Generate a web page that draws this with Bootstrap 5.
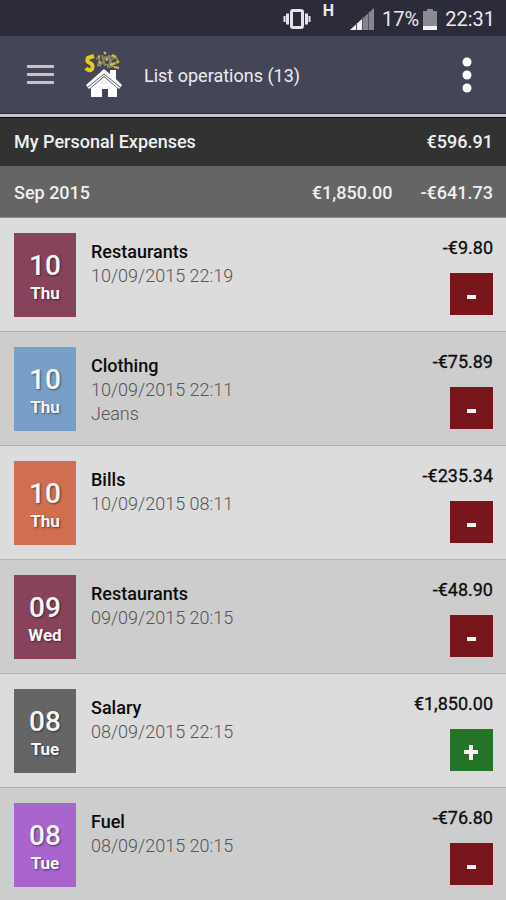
<!DOCTYPE html>
<html lang="en">
<head>
<meta charset="utf-8">
<meta name="viewport" content="width=device-width, initial-scale=1">
<title>List operations</title>
<link href="https://cdn.jsdelivr.net/npm/bootstrap@5.3.0/dist/css/bootstrap.min.css" rel="stylesheet">
<style>
body { font-family: Roboto, "Liberation Sans", sans-serif; font-size: 18px; line-height: 24px; font-weight: 500; background: #cdcdcd; color: #0c0c0c; }
.status-bar { height: 36px; background: #2c2b39; color: #e9e9ee; font-size: 20px; font-weight: 400; padding-right: 11px; padding-top: 2px; }
.net-type { font-size: 16px; line-height: 16px; font-weight: 700; padding-bottom: 16px; }
.app-bar { height: 81px; background: #454558; border-bottom: 3px solid #c4c4cc; box-shadow: inset 0 -1px #33333f; padding: 0 34px 0 25px; }
.app-title { font-size: 18px; line-height: 24px; font-weight: 400; color: #ececf2; margin-left: 18px; padding-top: 2px; }
.logo { margin-left: 28px; }
.total-bar { height: 49px; background: #323232; color: #efefef; border-top: 1px solid #0b0b0b; }
.month-bar { height: 52px; background: #656565; color: #efefef; border-bottom: 1px solid #8e8e8e; gap: 28px; padding-top: 3px; }
.side-pad { padding-left: 14px; padding-right: 13px; }
.entry { padding-top: 15px; padding-bottom: 14px; border-bottom: 1px solid #b2b2b2; background: #dcdcdc; gap: 15px; }
.entry:nth-child(even) { background: #cdcdcd; }
.entry:last-child { border-bottom: 0; padding-bottom: 13px; }
.day-tile { width: 62px; height: 84px; color: #f6f6f6; text-shadow: 1px 1px 2px rgba(0, 0, 0, .5); padding-top: 6px; }
.day-num { font-size: 28px; line-height: 30px; }
.day-name { font-size: 17px; line-height: 24px; font-weight: 700; }
.details { padding-top: 7px; }
.muted { font-weight: 300; color: #555; }
.amount { font-weight: 400; line-height: 28px; padding-top: 1px; padding-bottom: 11px; -webkit-text-stroke: .3px; }
.sign-btn { width: 43px; height: 42px; }
.sign-minus { background: #78161b; }
.sign-plus { background: #257326; }
.plum { background: #87435b; }
.sky { background: #789fc7; }
.coral { background: #cf6f50; }
.slate { background: #656565; }
.violet { background: #a965cd; }
</style>
<script src="https://cdn.jsdelivr.net/npm/bootstrap@5.3.0/dist/js/bootstrap.bundle.min.js"></script>
</head>
<body>
<div class="status-bar d-flex align-items-center justify-content-end">
  <svg width="28" height="22" viewBox="0 0 28 22" aria-hidden="true"><g fill="none" stroke="#e4e4e8"><rect x="8.500" y="2.500" width="11" height="17" rx="1.500" stroke-width="3"/><path d="M4.500 5.500v11M23.500 5.500v11" stroke-width="3"/><path d="M1.500 8v6M26.500 8v6" stroke-width="2"/></g></svg>
  <span class="net-type ms-2 ps-1">H</span>
  <svg class="ms-3" width="24" height="22" viewBox="0 0 24 22" aria-hidden="true"><path d="M24 0v22H0z" fill="#85858f"/><path d="M12 11v11H0z" fill="#eee"/><path d="M6.500 15v7M12.500 9v13M18.500 4v18" stroke="#555460"/></svg>
  <span class="ms-2">17%</span>
  <svg class="ms-1" width="14" height="21" viewBox="0 0 14 21" aria-hidden="true"><path d="M4 0h6v2h4v19H0V2h4z" fill="#8b8a94"/><path d="M0 17h14v4H0z" fill="#f2f2f2"/></svg>
  <span class="ms-2">22:31</span>
</div>
<header class="app-bar d-flex align-items-center">
  <button type="button" class="btn border-0 p-0 d-flex" aria-label="Menu"><svg width="29" height="21" viewBox="0 0 29 21"><path d="M2 1.500h27M2 9.500h27M2 17.500h27" stroke="#c3c3cd" stroke-width="3"/></svg></button>
  <svg class="logo" width="44" height="48" viewBox="0 0 44 48" aria-hidden="true">
    <path d="M12 5L6 7Q4 11 8 12Q12 14 10 18Q7 21 4 17" fill="none" stroke="#e4cb1d" stroke-width="4"/>
    <g fill="none" stroke="#8a8668" stroke-width="2"><path d="M14 8q5-3 3 3t4 0M20 4l3 11M23 9q5-5 5 1t-5 3M27 4l3 11M29 9q6-5 6 0t-6 4M15 14l4 1M25 16l7-1M20 7l12-2"/></g>
    <path d="M22 1l2 2M30 4l4 2M16 6l2-1M28 14l5-2M32 16l5 1M24 9l2-1M35 12l2-2M17 11l2 1" stroke="#d8c02f" stroke-width="2"/>
    <path d="M4 34L22 18l6 5v-4h6v9l6 6-3 4-15-13L7 38z" fill="#fff"/>
    <path d="M9 37l13-11 13 11v9H26v-8h-6v8H9z" fill="#fff"/>
    <path d="M6 36l16-13 16 13" fill="none" stroke="#5b5b70" stroke-width="1"/>
  </svg>
  <h1 class="app-title mb-0 flex-grow-1">List operations (13)</h1>
  <button type="button" class="btn border-0 p-0 d-flex" aria-label="More options"><svg width="10" height="36" viewBox="0 0 10 36"><g fill="#fff"><circle cx="5" cy="5" r="4.500"/><circle cx="5" cy="18" r="4.500"/><circle cx="5" cy="31" r="4.500"/></g></svg></button>
</header>
<main>
  <div class="total-bar side-pad d-flex align-items-center justify-content-between"><span>My Personal Expenses</span><span>€596.91</span></div>
  <div class="month-bar side-pad d-flex align-items-center"><span class="flex-grow-1">Sep 2015</span><span>€1,850.00</span><span>-€641.73</span></div>
  <ul class="list-unstyled mb-0">
    <li class="entry side-pad d-flex">
      <div class="day-tile plum d-flex flex-column align-items-center justify-content-center"><span class="day-num">10</span><span class="day-name">Thu</span></div>
      <div class="details flex-grow-1"><div>Restaurants</div><div class="muted">10/09/2015 22:19</div></div>
      <div class="d-flex flex-column align-items-end"><span class="amount">-€9.80</span><button type="button" class="btn btn-dark sign-btn sign-minus border-0 rounded-0 p-0 d-flex" aria-label="Expense"><svg width="43" height="42" viewBox="0 0 43 42"><path d="M17 22h9v4h-9z" fill="#f4f4f4"/></svg></button></div>
    </li>
    <li class="entry side-pad d-flex">
      <div class="day-tile sky d-flex flex-column align-items-center justify-content-center"><span class="day-num">10</span><span class="day-name">Thu</span></div>
      <div class="details flex-grow-1"><div>Clothing</div><div class="muted">10/09/2015 22:11</div><div class="muted">Jeans</div></div>
      <div class="d-flex flex-column align-items-end"><span class="amount">-€75.89</span><button type="button" class="btn btn-dark sign-btn sign-minus border-0 rounded-0 p-0 d-flex" aria-label="Expense"><svg width="43" height="42" viewBox="0 0 43 42"><path d="M17 22h9v4h-9z" fill="#f4f4f4"/></svg></button></div>
    </li>
    <li class="entry side-pad d-flex">
      <div class="day-tile coral d-flex flex-column align-items-center justify-content-center"><span class="day-num">10</span><span class="day-name">Thu</span></div>
      <div class="details flex-grow-1"><div>Bills</div><div class="muted">10/09/2015 08:11</div></div>
      <div class="d-flex flex-column align-items-end"><span class="amount">-€235.34</span><button type="button" class="btn btn-dark sign-btn sign-minus border-0 rounded-0 p-0 d-flex" aria-label="Expense"><svg width="43" height="42" viewBox="0 0 43 42"><path d="M17 22h9v4h-9z" fill="#f4f4f4"/></svg></button></div>
    </li>
    <li class="entry side-pad d-flex">
      <div class="day-tile plum d-flex flex-column align-items-center justify-content-center"><span class="day-num">09</span><span class="day-name">Wed</span></div>
      <div class="details flex-grow-1"><div>Restaurants</div><div class="muted">09/09/2015 20:15</div></div>
      <div class="d-flex flex-column align-items-end"><span class="amount">-€48.90</span><button type="button" class="btn btn-dark sign-btn sign-minus border-0 rounded-0 p-0 d-flex" aria-label="Expense"><svg width="43" height="42" viewBox="0 0 43 42"><path d="M17 22h9v4h-9z" fill="#f4f4f4"/></svg></button></div>
    </li>
    <li class="entry side-pad d-flex">
      <div class="day-tile slate d-flex flex-column align-items-center justify-content-center"><span class="day-num">08</span><span class="day-name">Tue</span></div>
      <div class="details flex-grow-1"><div>Salary</div><div class="muted">08/09/2015 22:15</div></div>
      <div class="d-flex flex-column align-items-end"><span class="amount">€1,850.00</span><button type="button" class="btn btn-dark sign-btn sign-plus border-0 rounded-0 p-0 d-flex" aria-label="Income"><svg width="43" height="42" viewBox="0 0 43 42"><path d="M14 21h5v-5h4v5h5v4h-5v6h-4v-6h-5z" fill="#f4f4f4"/></svg></button></div>
    </li>
    <li class="entry side-pad d-flex">
      <div class="day-tile violet d-flex flex-column align-items-center justify-content-center"><span class="day-num">08</span><span class="day-name">Tue</span></div>
      <div class="details flex-grow-1"><div>Fuel</div><div class="muted">08/09/2015 20:15</div></div>
      <div class="d-flex flex-column align-items-end"><span class="amount">-€76.80</span><button type="button" class="btn btn-dark sign-btn sign-minus border-0 rounded-0 p-0 d-flex" aria-label="Expense"><svg width="43" height="42" viewBox="0 0 43 42"><path d="M17 22h9v4h-9z" fill="#f4f4f4"/></svg></button></div>
    </li>
  </ul>
</main>
</body>
</html>
